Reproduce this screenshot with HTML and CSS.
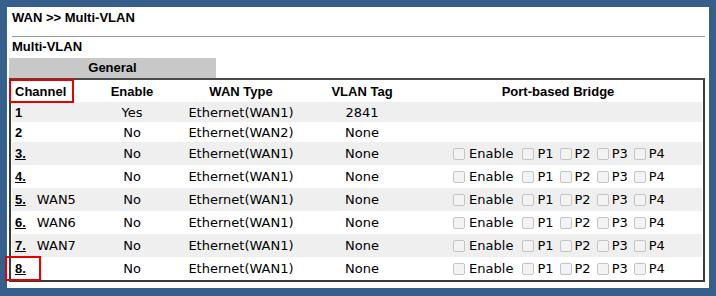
FILE: index.html
```html
<!DOCTYPE html>
<html lang="en">
<head>
  <meta charset="UTF-8" />
  <title>WAN &gt;&gt; Multi-VLAN</title>
  <link rel="stylesheet" href="styles.css">
</head>
<body>
  <div class="panel">
    <div class="page-title">WAN &gt;&gt; Multi-VLAN</div>
    <div class="sub-title">Multi-VLAN</div>
    <div class="tab">General</div>

    <table class="vlan-table">
      <colgroup>
        <col class="c-chan"><col class="c-en"><col class="c-wan"><col class="c-tag"><col class="c-br">
      </colgroup>
      <tr class="head">
        <th class="chan">Channel</th>
        <th>Enable</th>
        <th>WAN Type</th>
        <th>VLAN Tag</th>
        <th>Port-based Bridge</th>
      </tr>
      <tr class="short odd">
        <td class="chan"><b>1</b></td><td>Yes</td><td>Ethernet(WAN1)</td><td>2841</td><td></td>
      </tr>
      <tr class="short">
        <td class="chan"><b>2</b></td><td>No</td><td>Ethernet(WAN2)</td><td>None</td><td></td>
      </tr>
      <tr class="odd">
        <td class="chan"><a href="#">3.</a></td><td>No</td><td>Ethernet(WAN1)</td><td>None</td>
        <td><div class="ports"><label><input type="checkbox" disabled>Enable</label><label><input type="checkbox" disabled>P1</label><label><input type="checkbox" disabled>P2</label><label><input type="checkbox" disabled>P3</label><label><input type="checkbox" disabled>P4</label></div></td>
      </tr>
      <tr>
        <td class="chan"><a href="#">4.</a></td><td>No</td><td>Ethernet(WAN1)</td><td>None</td>
        <td><div class="ports"><label><input type="checkbox" disabled>Enable</label><label><input type="checkbox" disabled>P1</label><label><input type="checkbox" disabled>P2</label><label><input type="checkbox" disabled>P3</label><label><input type="checkbox" disabled>P4</label></div></td>
      </tr>
      <tr class="odd">
        <td class="chan"><a href="#">5.</a><span class="alias">WAN5</span></td><td>No</td><td>Ethernet(WAN1)</td><td>None</td>
        <td><div class="ports"><label><input type="checkbox" disabled>Enable</label><label><input type="checkbox" disabled>P1</label><label><input type="checkbox" disabled>P2</label><label><input type="checkbox" disabled>P3</label><label><input type="checkbox" disabled>P4</label></div></td>
      </tr>
      <tr>
        <td class="chan"><a href="#">6.</a><span class="alias">WAN6</span></td><td>No</td><td>Ethernet(WAN1)</td><td>None</td>
        <td><div class="ports"><label><input type="checkbox" disabled>Enable</label><label><input type="checkbox" disabled>P1</label><label><input type="checkbox" disabled>P2</label><label><input type="checkbox" disabled>P3</label><label><input type="checkbox" disabled>P4</label></div></td>
      </tr>
      <tr class="odd">
        <td class="chan"><a href="#">7.</a><span class="alias">WAN7</span></td><td>No</td><td>Ethernet(WAN1)</td><td>None</td>
        <td><div class="ports"><label><input type="checkbox" disabled>Enable</label><label><input type="checkbox" disabled>P1</label><label><input type="checkbox" disabled>P2</label><label><input type="checkbox" disabled>P3</label><label><input type="checkbox" disabled>P4</label></div></td>
      </tr>
      <tr>
        <td class="chan"><a href="#">8.</a></td><td>No</td><td>Ethernet(WAN1)</td><td>None</td>
        <td><div class="ports"><label><input type="checkbox" disabled>Enable</label><label><input type="checkbox" disabled>P1</label><label><input type="checkbox" disabled>P2</label><label><input type="checkbox" disabled>P3</label><label><input type="checkbox" disabled>P4</label></div></td>
      </tr>
    </table>
  </div>

  <!-- highlight boxes drawn over the page -->
  <div class="mark mark-channel"></div>
  <div class="mark mark-eight"></div>
</body>
</html>
```

FILE: styles.css
```css
* {
  margin: 0; padding: 0; box-sizing: border-box;
}

body {
  background: #365f8b;
  padding: 7px;
  position: relative;
  font-family: "DejaVu Sans", Verdana, sans-serif;
  font-size: 13px;
  color: #000;
}

.panel {
  background: #fff;
  width: 702px;
  height: 281px;
  padding: 0 4px 0 2px;
}

.page-title {
  font-family: "Liberation Sans", Arial, sans-serif;
  font-weight: bold;
  font-size: 13px;
  line-height: 16px;
  padding-top: 3px;
  height: 30px;
  margin-left: 3px;
  border-bottom: 1px solid #999;
}

.sub-title {
  font-family: "Liberation Sans", Arial, sans-serif;
  font-weight: bold;
  font-size: 13px;
  line-height: 16px;
  margin-top: 2px;
  padding-left: 3px;
}

.tab {
  margin-top: 3px;
  width: 207px;
  height: 20px;
  line-height: 20px;
  background: #c8c8c8;
  text-align: center;
  font-family: "Liberation Sans", Arial, sans-serif;
  font-weight: bold;
  font-size: 13px;
}

.vlan-table {
  width: 696px;
  table-layout: fixed;
  border-collapse: separate;
  border-spacing: 0;
  border: 2px solid #3a3a3a;
  border-top-color: #4a4a4a;
  padding: 0 1px;
}

.c-chan { width: 80px; }
.c-en { width: 80px; }
.c-wan { width: 138px; }
.c-tag { width: 104px; }
.c-br { width: 288px; }

.vlan-table th {
  font-family: "Liberation Sans", Arial, sans-serif;
  font-weight: bold;
  font-size: 13px;
  height: 22px;
  text-align: center;
}

.vlan-table td {
  text-align: center;
  white-space: nowrap;
  height: 23px;
}

.vlan-table tr.short td {
  height: 20px;
}

.vlan-table tr.odd td {
  background: #efefef;
}

.vlan-table .chan {
  text-align: left;
  padding-left: 3px;
}

.chan b,
.chan a {
  font-family: "Liberation Sans", Arial, sans-serif;
  font-weight: bold;
  color: #000;
}

.alias {
  margin-left: 11px;
}

.ports {
  display: flex;
  justify-content: center;
  align-items: center;
  padding-left: 2px;
}

.ports label {
  display: inline-flex;
  align-items: center;
  margin-right: 6px;
}

.ports label:first-child {
  margin-right: 9px;
}

.ports label:last-child {
  margin-right: 0;
}

.ports input {
  appearance: none;
  width: 12px;
  height: 12px;
  margin: 0 3px 0 0;
  border: 1px solid #c4c4c4;
  border-radius: 2px;
  background: #f3f3f3;
}

.ports label:first-child input {
  margin-right: 4px;
}

.mark {
  position: absolute;
  border: 2px solid #e60000;
}

.mark-channel {
  left: 9px; top: 79px;
  width: 65px; height: 24px;
}

.mark-eight {
  left: 5px; top: 256px;
  width: 36px; height: 25px;
}
```
